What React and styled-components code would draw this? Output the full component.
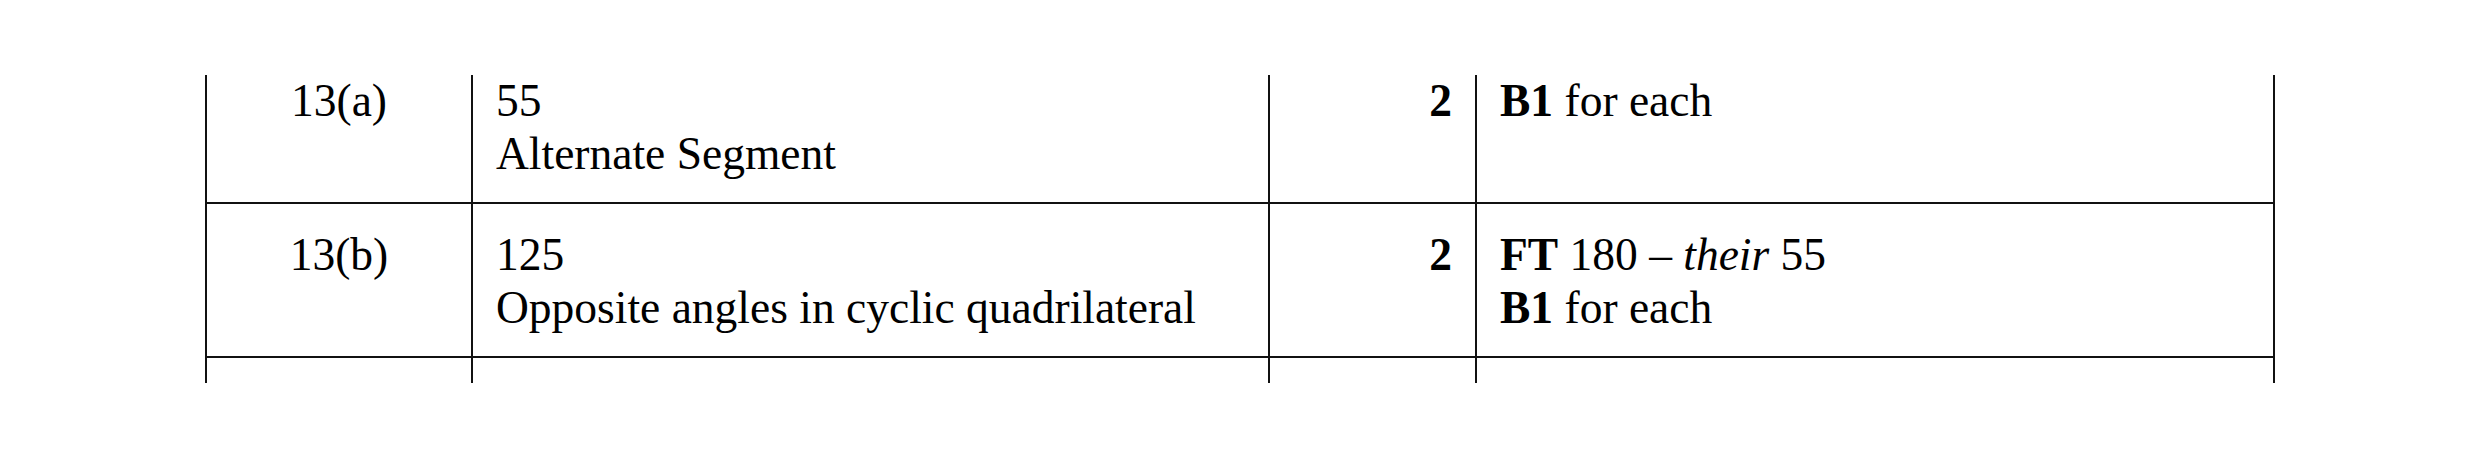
import React from "react";
import styled, { createGlobalStyle } from "styled-components";

const GlobalStyle = createGlobalStyle`
  html, body {
    margin: 0;
    padding: 0;
    background: #ffffff;
  }
`;

const Page = styled.div`
  width: 2481px;
  height: 459px;
  padding: 75px 0 0 205px;
  box-sizing: border-box;
  background: #fff;
`;

/* the table continues above and below the crop, so clip it */
const Clip = styled.div`
  width: 2072px;
  height: 308px;
  overflow: hidden;
`;

const Grid = styled.div`
  margin-top: -25px;
  display: grid;
  grid-template-columns: 266px 797px 207px 798px;
  border-left: 2px solid #111;
  font-family: "Liberation Serif", "Times New Roman", serif;
  font-size: 45.5px;
  line-height: 53px;
  color: #000;
`;

const Cell = styled.div`
  box-sizing: border-box;
  border-right: 2px solid #111;
  border-bottom: 2px solid #111;
  padding: ${(p) => (p.$empty ? "0" : "24px 23px 22px 23px")};
  min-height: ${(p) => (p.$empty ? "80px" : "0")};
  text-align: ${(p) => p.$align || "left"};
`;

const Line = styled.div`
  white-space: nowrap;
`;

const B = styled.b`
  font-weight: 700;
`;

const I = styled.i`
  font-style: italic;
`;

const rows = [
  {
    q: "13(a)",
    answer: ["55", "Alternate Segment"],
    mark: "2",
    notes: [
      <>
        <B>B1</B> for each
      </>,
    ],
  },
  {
    q: "13(b)",
    answer: ["125", "Opposite angles in cyclic quadrilateral"],
    mark: "2",
    notes: [
      <>
        <B>FT</B> 180 – <I>their</I> 55
      </>,
      <>
        <B>B1</B> for each
      </>,
    ],
  },
];

export default function App() {
  return (
    <>
      <GlobalStyle />
      <Page>
        <Clip>
          <Grid>
            {rows.map((r) => (
              <React.Fragment key={r.q}>
                <Cell $align="center">
                  <Line>{r.q}</Line>
                </Cell>
                <Cell>
                  {r.answer.map((a) => (
                    <Line key={a}>{a}</Line>
                  ))}
                </Cell>
                <Cell $align="right">
                  <Line>
                    <B>{r.mark}</B>
                  </Line>
                </Cell>
                <Cell>
                  {r.notes.map((n, i) => (
                    <Line key={i}>{n}</Line>
                  ))}
                </Cell>
              </React.Fragment>
            ))}
            <Cell $empty />
            <Cell $empty />
            <Cell $empty />
            <Cell $empty />
          </Grid>
        </Clip>
      </Page>
    </>
  );
}
